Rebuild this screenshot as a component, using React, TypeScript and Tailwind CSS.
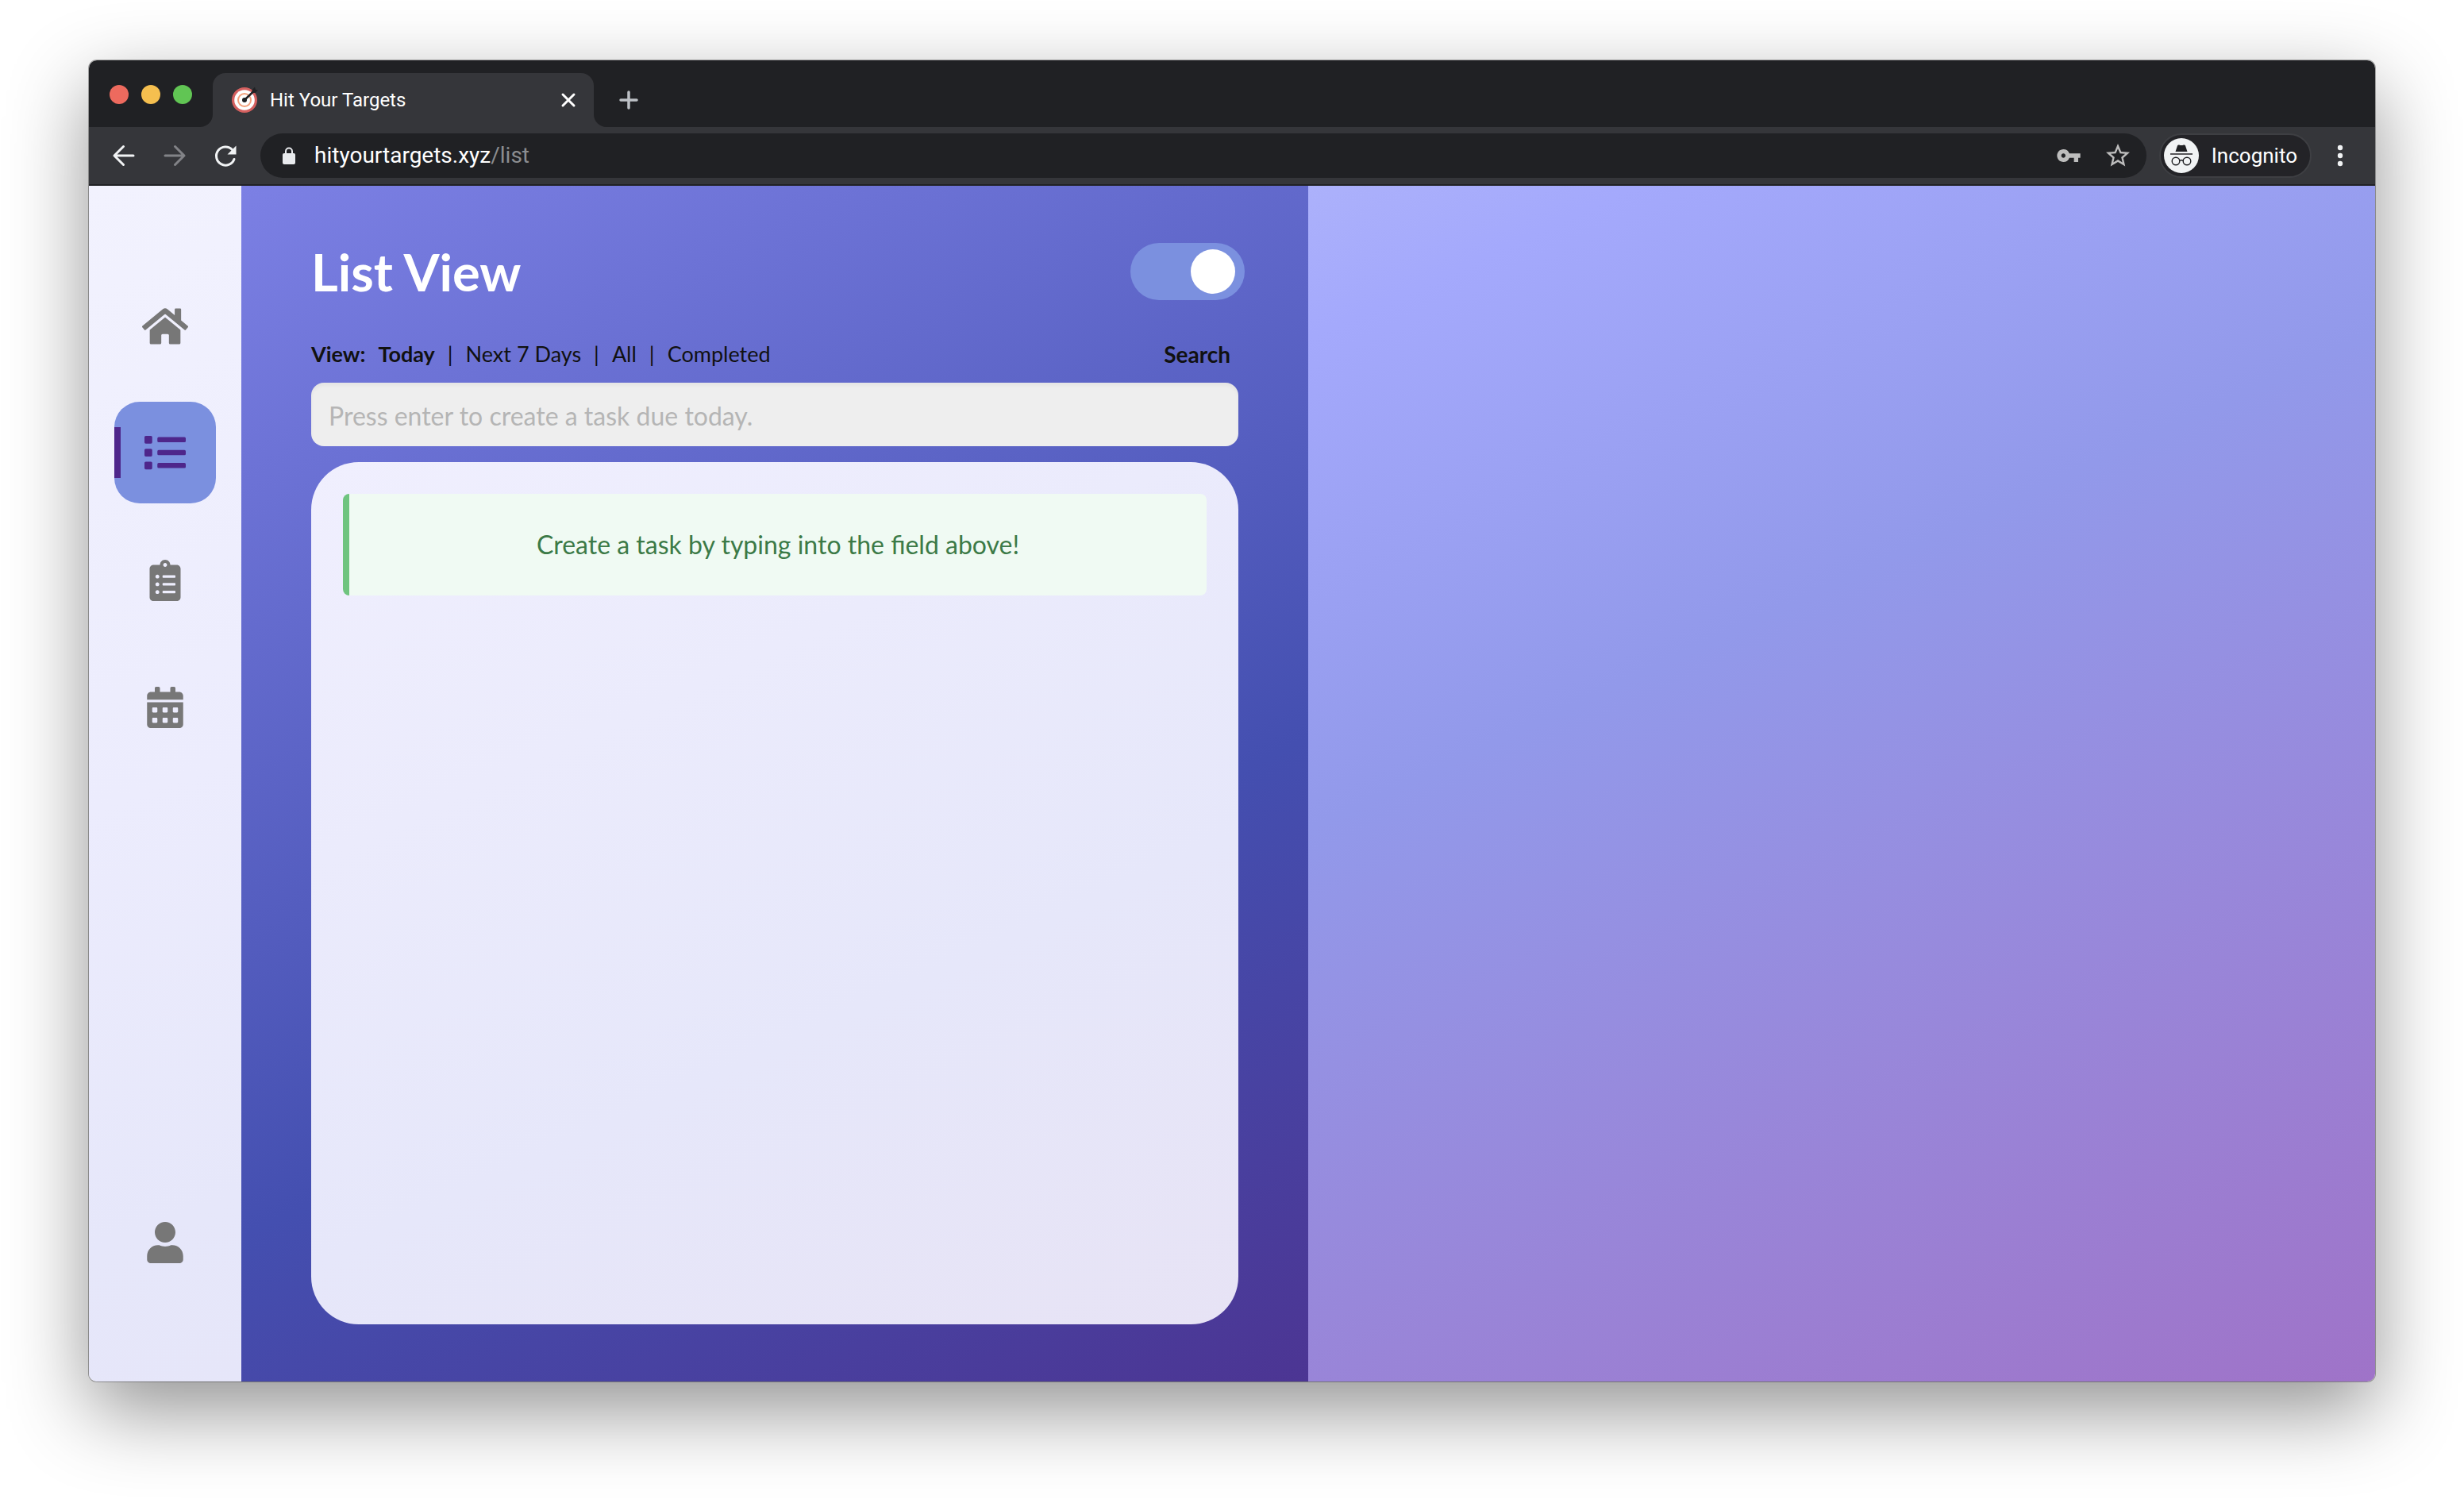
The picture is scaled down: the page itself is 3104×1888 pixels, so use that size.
import { useState } from "react";
import { FaHome, FaList, FaClipboardList, FaCalendarAlt, FaUser } from "react-icons/fa";
import { MdVpnKey, MdStarBorder } from "react-icons/md";

function TargetLogo() {
  return (
    <svg viewBox="0 0 34 34" className="h-[34px] w-[34px] shrink-0" aria-hidden="true">
      <circle cx="16" cy="17" r="16" fill="#d4605f" />
      <circle cx="16" cy="17" r="12.800" fill="#fff" />
      <circle cx="16" cy="17" r="9" fill="#f2a07c" />
      <circle cx="16" cy="17" r="7" fill="#fff" />
      <circle cx="16" cy="17" r="3" fill="#202124" />
      <path d="M16 17 28 5.500" stroke="#202124" strokeWidth="2.600" />
      <path d="M25.500 7.500V4.500l3.500-4 1 3.500 3 .5-3.500 3.500z" fill="#202124" />
    </svg>
  );
}

function IncognitoMark() {
  return (
    <svg viewBox="0 0 44 44" className="h-11 w-11 shrink-0" aria-hidden="true">
      <circle cx="22" cy="22" r="22" fill="#f1f3f4" />
      <path d="M14.500 17 17 9.500q.6-1.500 2.200-1 2.800 1 5.600 0 1.600-.5 2.200 1L29.500 17z" fill="#202124" />
      <path d="M8 20h28" stroke="#202124" strokeWidth="1.600" />
      <g fill="none" stroke="#202124" strokeWidth="1.400">
        <circle cx="15" cy="29" r="4.800" />
        <circle cx="29" cy="29" r="4.800" />
        <path d="M19.600 28.500q2.400-1.500 4.800 0" />
      </g>
    </svg>
  );
}

function ArrowIcon({ flip = false }: { flip?: boolean }) {
  return (
    <svg
      viewBox="0 0 40 40"
      className="h-10 w-10"
      fill="none"
      stroke="currentColor"
      strokeWidth="3"
      strokeLinecap="round"
      strokeLinejoin="round"
      aria-hidden="true"
    >
      <path d={flip ? "M8 20h24M20.500 8.500 32 20 20.500 31.500" : "M32 20H8M19.500 8.500 8 20l11.500 11.500"} />
    </svg>
  );
}

function ReloadIcon() {
  return (
    <svg viewBox="0 0 40 40" className="h-10 w-10" aria-hidden="true">
      <path
        d="M31 24.500A11.600 11.600 0 1 1 28.500 12.500"
        fill="none"
        stroke="currentColor"
        strokeWidth="3"
        strokeLinecap="round"
      />
      <path d="M33.500 7.500v11h-11z" fill="currentColor" />
    </svg>
  );
}

function LockIcon() {
  return (
    <svg viewBox="0 0 24 24" className="h-6 w-6 text-[#e8eaed]" aria-hidden="true">
      <path d="M8 11V6.500a4 4 0 0 1 8 0V11" fill="none" stroke="currentColor" strokeWidth="2" />
      <rect x="4" y="9" width="16" height="14" rx="2" fill="currentColor" />
    </svg>
  );
}

function TabBar() {
  return (
    <div className="flex h-[84px] items-end bg-[#202124] pl-[26px]">
      <div className="mb-[29px] flex gap-4">
        <button aria-label="Close window" className="h-6 w-6 rounded-full bg-[#ed6a5e]" />
        <button aria-label="Minimize window" className="h-6 w-6 rounded-full bg-[#f5bf4f]" />
        <button aria-label="Zoom window" className="h-6 w-6 rounded-full bg-[#61c554]" />
      </div>
      <svg viewBox="0 0 16 16" className="ml-[10px] h-4 w-4" aria-hidden="true">
        <path d="M16 0v16H0A16 16 0 0 0 16 0z" fill="#35363a" />
      </svg>
      <div className="flex h-[68px] w-[480px] items-center rounded-t-2xl bg-[#35363a] pr-[22px] pl-6">
        <TargetLogo />
        <span className="ml-[14px] text-2xl text-white">Hit Your Targets</span>
        <button aria-label="Close tab" className="ml-auto">
          <svg viewBox="0 0 20 20" className="h-5 w-5" stroke="#fff" strokeWidth="3" strokeLinecap="round">
            <path d="M3 3 17 17M17 3 3 17" />
          </svg>
        </button>
      </div>
      <svg viewBox="0 0 16 16" className="h-4 w-4" aria-hidden="true">
        <path d="M0 0v16h16A16 16 0 0 1 0 0z" fill="#35363a" />
      </svg>
      <button aria-label="New tab" className="mb-[22px] ml-4">
        <svg viewBox="0 0 24 24" className="h-6 w-6" stroke="#bdc1c6" strokeWidth="3.500" strokeLinecap="round">
          <path d="M12 2v20M2 12h20" />
        </svg>
      </button>
    </div>
  );
}

function Toolbar() {
  return (
    <div className="flex h-[74px] items-center border-b-2 border-[#202124] bg-[#35363a] pr-6 pl-6">
      <button aria-label="Back" className="text-[#f1f3f4]"><ArrowIcon /></button>
      <button aria-label="Forward" className="ml-6 text-[#828387]"><ArrowIcon flip /></button>
      <button aria-label="Reload" className="ml-6 text-[#f1f3f4]"><ReloadIcon /></button>
      <div className="ml-6 flex h-14 flex-1 items-center rounded-full bg-[#202124] pr-[18px] pl-6">
        <LockIcon />
        <span className="ml-5 text-[28px] leading-9 text-white">
          hityourtargets.xyz<span className="text-[#8b8d90]">/list</span>
        </span>
        <button aria-label="Saved password" className="ml-auto text-[#bdbdbd]"><MdVpnKey className="h-8 w-8" /></button>
        <button aria-label="Bookmark" className="ml-7 text-[#bdbdbd]"><MdStarBorder className="h-9 w-9" /></button>
      </div>
      <div className="ml-4 flex h-14 items-center rounded-full border-2 border-[#3e3f43] bg-[#232327] pr-4 pl-1">
        <IncognitoMark />
        <span className="ml-4 text-[26px] leading-9 text-white">Incognito</span>
      </div>
      <button aria-label="Menu" className="ml-4 text-[#f1f3f4]">
        <svg viewBox="0 0 40 40" className="h-10 w-10" fill="currentColor" aria-hidden="true">
          <circle cx="20" cy="10" r="3.200" />
          <circle cx="20" cy="20" r="3.200" />
          <circle cx="20" cy="30" r="3.200" />
        </svg>
      </button>
    </div>
  );
}

const links = [
  { label: "Home", Icon: FaHome, size: "h-[52px] w-[58px]", active: false },
  { label: "List", Icon: FaList, size: "ml-[30px] h-[52px] w-[52px]", active: true },
  { label: "Board", Icon: FaClipboardList, size: "h-[52px] w-[52px]", active: false },
  { label: "Calendar", Icon: FaCalendarAlt, size: "h-[52px] w-[52px]", active: false },
];

function Sidebar() {
  return (
    <nav className="flex w-48 shrink-0 flex-col items-center justify-between bg-[linear-gradient(160deg,#f2f2fe_0%,#ececfd_50%,#e6e7fa_85%,#e6e6f9_100%)] pt-28 pb-28">
      <div className="flex flex-col gap-8">
        {links.map(({ label, Icon, size, active }) => (
          <a
            key={label}
            href={"#" + label.toLowerCase()}
            aria-label={label}
            className={
              active
                ? "flex h-32 w-32 items-center rounded-[32px] bg-[#7b90df] text-[#4e268b]"
                : "flex h-32 w-32 items-center justify-center pt-0.5 text-[#777]"
            }
          >
            {active && <span className="h-16 w-2 bg-[#4e268b]" />}
            <Icon className={size} />
          </a>
        ))}
      </div>
      <a href="#account" aria-label="Account" className="flex h-32 w-32 items-center justify-center pt-0.5 text-[#777]">
        <FaUser className="h-[52px] w-[52px]" />
      </a>
    </nav>
  );
}

const filters = ["Today", "Next 7 Days", "All", "Completed"];

function ListPanel() {
  const [filter, setFilter] = useState("Today");
  const [on, setOn] = useState(true);
  return (
    <section className="flex flex-col bg-[linear-gradient(155deg,#7c80e4_0%,#444fb0_62%,#4c3593_100%)] px-[88px] pt-[72px] pb-[72px]">
      <header className="-mr-2 flex h-[72px] items-center justify-between">
        <h1 className="text-[65px] leading-[72px] font-bold text-white">List View</h1>
        <label className="flex h-[72px] w-36 items-center rounded-full bg-[#7b90df] px-3">
          <input
            type="checkbox"
            role="switch"
            aria-label="Show list"
            checked={on}
            onChange={() => setOn(!on)}
            className="h-14 w-14 appearance-none rounded-full bg-white checked:ml-auto"
          />
        </label>
      </header>
      <div className="mt-12 flex h-10 items-center justify-between pr-[10px] text-[27px] leading-[38px] text-[#111]">
        <div className="flex items-center">
          <span className="mr-4 font-bold">View:</span>
          {filters.map((f, i) => (
            <div key={f} className="flex">
              {i > 0 && <span className="mx-4">|</span>}
              <button onClick={() => setFilter(f)} className={f === filter ? "font-bold" : "font-normal"}>{f}</button>
            </div>
          ))}
        </div>
        <button className="text-[28px] font-bold">Search</button>
      </div>
      <input
        type="text"
        aria-label="New task"
        placeholder="Press enter to create a task due today."
        className="mt-4 h-20 rounded-2xl bg-[#eee] px-[22px] pt-0.5 text-[32px] text-[#222] inset-shadow-[0_4px_4px_#0000000a] placeholder:text-[#b5b5b5]"
      />
      <div className="mt-5 flex-1 rounded-[60px] bg-[linear-gradient(155deg,#f0effe_0%,#e6e7fa_62%,#e7e3f5_100%)] p-10">
        <p className="flex h-32 items-center justify-center rounded-lg border-l-8 border-[#6fc47f] bg-[#f0faf3] text-[32px] text-[#3c7a47]">
          Create a task by typing into the field above!
        </p>
      </div>
    </section>
  );
}

export default function App() {
  return (
    <div className="flex min-h-screen flex-col bg-white px-28 pt-[76px] pb-[148px] font-['Lato',sans-serif]">
      <div className="flex flex-1 flex-col overflow-hidden rounded-[10px] shadow-[0_0_0_1px_#00000050,0_36px_100px_#0000006e]">
        <div className="font-['Roboto',sans-serif]">
          <TabBar />
          <Toolbar />
        </div>
        <main className="flex flex-1">
          <Sidebar />
          <div className="grid flex-1 grid-cols-2">
            <ListPanel />
            <section
              aria-label="Task details"
              className="bg-[linear-gradient(155deg,#acb1fb_0%,#a4a9fc_9%,#9299ea_38%,#9f73c8_100%)]"
            />
          </div>
        </main>
      </div>
    </div>
  );
}
